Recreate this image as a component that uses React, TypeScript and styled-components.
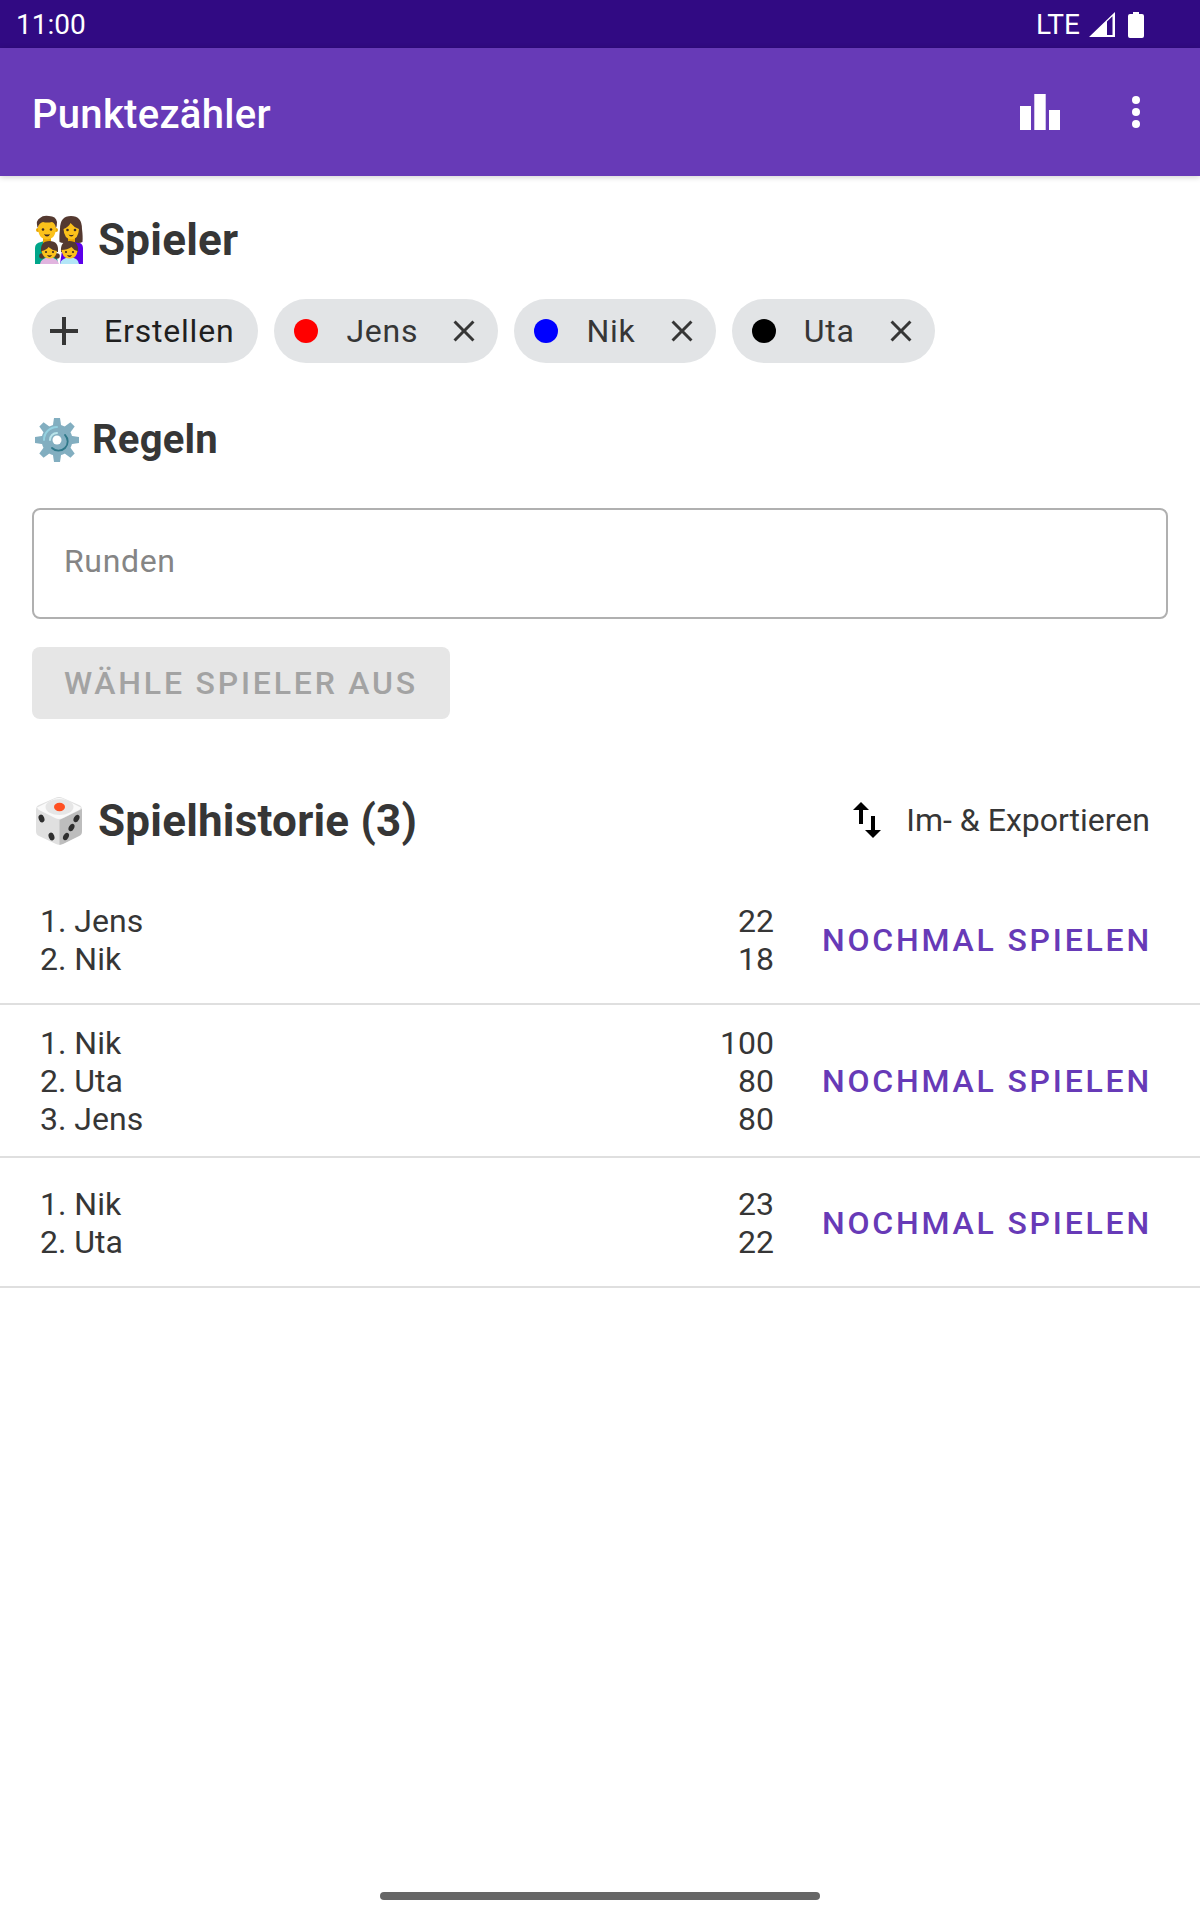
import React from 'react';
import styled, { createGlobalStyle } from 'styled-components';

const Global = createGlobalStyle`
  *, *::before, *::after { box-sizing: border-box; }
  body { margin: 0; background: #fff; color: #363636; font: 32px/38px Roboto, sans-serif; }
  button, input { font: inherit; color: inherit; letter-spacing: inherit; }
  h1, h2, ul, ol { margin: 0; padding: 0; }
  ul, ol { list-style: none; }
  svg { display: block; flex: none; }
`;

const Screen = styled.div`
  min-height: 100vh;
  display: flex;
  flex-direction: column;
`;

const StatusBar = styled.div`
  display: flex;
  justify-content: space-between;
  align-items: center;
  height: 48px;
  padding: 2px 56px 0 16px;
  background: #310a83;
  color: #fff;
  font-size: 28px;
`;

const StatusIcons = styled.div`
  display: flex;
  align-items: center;
  gap: 12px;
`;

const Network = styled.span`
  display: flex;
  align-items: center;
  gap: 8px;
`;

const AppBar = styled.header`
  display: flex;
  align-items: center;
  height: 128px;
  padding: 0 32px;
  background: #673ab7;
  color: #fff;
  box-shadow: 0 1px 6px rgba(0, 0, 0, 0.2);
`;

const AppTitle = styled.h1`
  flex: 1;
  padding-top: 6px;
  font-size: 40px;
  font-weight: 500;
  letter-spacing: 0.0075em;
`;

const Actions = styled.div`
  display: flex;
  gap: 48px;
  padding-right: 8px;
`;

const PlainButton = styled.button`
  display: flex;
  align-items: center;
  padding: 0;
  border: 0;
  background: none;
  cursor: pointer;
`;

const Section = styled.section`
  padding: 0 32px;
`;

const Heading = styled.h2<{ $small?: boolean }>`
  display: flex;
  align-items: center;
  gap: ${(p) => (p.$small ? 12 : 14)}px;
  padding-left: 2px;
  font-size: ${(p) => (p.$small ? 40 : 44)}px;
  line-height: 52px;
  font-weight: 700;
  letter-spacing: 0.005em;
`;

const PlayersSection = styled(Section)`
  padding-top: 38px;
`;

const Chips = styled.div`
  display: flex;
  flex-wrap: wrap;
  gap: 16px;
  margin-top: 33px;
`;

const Chip = styled.div`
  display: flex;
  align-items: center;
  height: 64px;
  padding: 0 16px 0 20px;
  border-radius: 32px;
  background: #e2e4e6;
  letter-spacing: 0.025em;
`;

const CreateChip = styled.button`
  display: flex;
  align-items: center;
  gap: 16px;
  height: 64px;
  padding: 0 24px 0 8px;
  border: 0;
  border-radius: 32px;
  background: #e2e4e6;
  color: #1f1f1f;
  letter-spacing: 0.025em;
  cursor: pointer;
`;

const Dot = styled.span<{ $color: string }>`
  width: 24px;
  height: 24px;
  border-radius: 50%;
  background: ${(p) => p.$color};
`;

const ChipName = styled.span`
  padding: 0 28px;
`;

const RulesSection = styled(Section)`
  padding-top: 51px;
`;

const RoundsField = styled.input`
  display: block;
  width: 100%;
  height: 111px;
  margin-top: 42px;
  padding: 0 30px 6px;
  border: 2px solid #b0b0b0;
  border-radius: 8px;
  background: transparent;
  letter-spacing: 0.02em;
  &::placeholder { color: #858585; opacity: 1; }
`;

const StartButton = styled.button`
  height: 72px;
  margin-top: 28px;
  padding: 0 32px;
  border: 0;
  border-radius: 8px;
  background: #e6e6e6;
  font-weight: 500;
  letter-spacing: 0.0875em;
  &:disabled { color: #a3a3a3; }
`;

const HistoryHeader = styled(Section)`
  display: flex;
  justify-content: space-between;
  align-items: center;
  padding-top: 76px;
`;

const TransferButton = styled(PlainButton)`
  gap: 15px;
  padding: 0 18px 2px 0;
`;

const GameList = styled.ul`
  margin-top: 28px;
`;

const GameRow = styled.li`
  display: flex;
  align-items: center;
  gap: 32px;
  min-height: 130px;
  padding: 19px 32px 18px 40px;
  border-bottom: 2px solid #dfdfdf;
`;

const Ranking = styled.ol`
  flex: 1;
`;

const Rank = styled.li`
  display: flex;
  justify-content: space-between;
`;

const ReplayButton = styled(PlainButton)`
  padding: 0 16px;
  color: #673ab7;
  font-weight: 500;
  letter-spacing: 0.0875em;
`;

const NavBar = styled.footer`
  display: flex;
  justify-content: center;
  margin-top: auto;
  padding: 20px 0;
`;

const NavHandle = styled.span`
  width: 440px;
  height: 8px;
  border-radius: 4px;
  background: #666;
`;

const SignalIcon = () => (
  <svg width="28" height="28" viewBox="0 0 28 28" fill="#fff">
    <path fillRule="evenodd" d="M27 1v25H1zM19 10.5V24h5.500V5.200z" />
  </svg>
);

const BatteryIcon = () => (
  <svg width="16" height="26" viewBox="0 0 16 26" fill="#fff">
    <path d="M5 0h6v2h3a2 2 0 0 1 2 2v20a2 2 0 0 1-2 2H2a2 2 0 0 1-2-2V4a2 2 0 0 1 2-2h3z" />
  </svg>
);

const StatsIcon = () => (
  <svg width="48" height="48" viewBox="0 0 48 48" fill="#fff">
    <path d="M4 18h11v24H4zM18.300 6h11.400v36H18.300zM33 22h11v20H33z" />
  </svg>
);

const MoreIcon = () => (
  <svg width="48" height="48" viewBox="0 0 48 48" fill="#fff">
    <circle cx="24" cy="12" r="4" />
    <circle cx="24" cy="24" r="4" />
    <circle cx="24" cy="36" r="4" />
  </svg>
);

const PlusIcon = () => (
  <svg width="48" height="48" viewBox="0 0 24 24" fill="#363636">
    <path d="M19 13h-6v6h-2v-6H5v-2h6V5h2v6h6z" />
  </svg>
);

const CloseIcon = () => (
  <svg width="36" height="36" viewBox="0 0 24 24" fill="#363636">
    <path d="M19 6.410L17.590 5 12 10.590 6.410 5 5 6.410 10.590 12 5 17.590 6.410 19 12 13.410 17.590 19 19 17.590 13.410 12z" />
  </svg>
);

const TransferIcon = () => (
  <svg width="48" height="48" viewBox="0 0 24 24" fill="#000">
    <path d="M9 3L5 6.990h3V14h2V6.990h3L9 3zm7 14.010V10h-2v7.010h-3L15 21l4-3.990h-3z" />
  </svg>
);

const FamilyIcon = () => (
  <svg width="50" height="50" viewBox="0 0 50 50">
    <path d="M1 49V33q0-5 6-6l6-2 8 4 3 20z" fill="#00a68a" />
    <path d="M49 49V33q0-5-6-6l-6-2-8 4-3 20z" fill="#5b00ea" />
    <path d="M9 21h8v7l-4 3-4-3z" fill="#e8a500" />
    <path d="M37 1q11 0 11 13 1 8 .5 13-4 2-8 0l-3.500-4-3.500 4q-4 2-8 0-.5-5 .5-13Q26 1 37 1z" fill="#543930" />
    <path d="M34 21h7v6l-3.500 3-3.500-3z" fill="#e8a500" />
    <circle cx="4" cy="15" r="2" fill="#e8a500" />
    <circle cx="22" cy="15" r="2" fill="#e8a500" />
    <path d="M4 12q0-9 9-9t9 9q0 12-9 12.500Q4 24 4 12z" fill="#fbc11b" />
    <path d="M3.500 13Q1.500 5 6 3q3-3 9-2 7 0 8 6 0 4-1 6-1-5-4-6-5 1-9 0-4 1-5.500 6z" fill="#543930" />
    <path d="M29.500 14q5-2 7-6 3 4 8.500 6-.5 10-7.500 10.500-7.500-.5-8-10.500z" fill="#fbc11b" />
    <g fill="#3d2b24">
      <circle cx="9" cy="14.500" r="1.300" />
      <circle cx="17" cy="14.500" r="1.300" />
      <circle cx="33.500" cy="15" r="1.300" />
      <circle cx="41" cy="15" r="1.300" />
      <path d="M10 19q3 1 6 0-1 2.500-3 2.500T10 19zM34.500 19.500q3 1 5.500 0-1 2-2.700 2t-2.800-2z" />
    </g>
    <path d="M6 49q1-6 9-6.500t10 6.500z" fill="#e1b4df" />
    <path d="M26 49q1-6 9.500-6.500T45 49z" fill="#b3e6f7" />
    <circle cx="8" cy="41" r="2.800" fill="#543930" />
    <circle cx="23" cy="41" r="2.800" fill="#543930" />
    <path d="M7 37q-1-11 8.500-11T24 37zM27 37q-1-11 8.500-11T44 37z" fill="#543930" />
    <path d="M7.500 36q5-1 7-4 3 3 8.500 4-1 7.500-7.500 7.500T7.500 36z" fill="#fbc11b" />
    <path d="M27.500 35q6 0 10-3 2 3 6 4-1 7.500-8 7.500t-8-8.500z" fill="#fbc11b" />
    <g fill="#3d2b24">
      <circle cx="12" cy="37" r="1.100" />
      <circle cx="19" cy="37" r="1.100" />
      <circle cx="32" cy="37" r="1.100" />
      <circle cx="39" cy="37" r="1.100" />
      <path d="M13 40q2.500.8 5 0-1 2-2.500 2T13 40zM33 40q2.500.8 5 0-1 2-2.500 2T33 40z" />
    </g>
  </svg>
);

const GearIcon = () => (
  <svg width="46" height="46" viewBox="0 0 46 46">
    <g fill="#82aec0">
      {[0, 45, 90, 135, 180, 225, 270, 315].map((a) => (
        <path key={a} d="M20 1h6l1.500 10h-9z" transform={`rotate(${a} 23 23)`} />
      ))}
    </g>
    <circle cx="23" cy="23" r="10" fill="none" stroke="#82aec0" strokeWidth="11" />
    <path d="M10 23A13 13 0 0 1 23 10" fill="none" stroke="#94d1e0" strokeWidth="2" strokeLinecap="round" />
    <circle cx="23" cy="23" r="8" fill="#82aec0" />
    <path d="M16 23A7 7 0 0 1 23 16" fill="none" stroke="#b9e4ea" strokeWidth="2" strokeLinecap="round" />
    <path d="M31 18A9 9 0 0 1 18 31" fill="none" stroke="#2f7889" strokeWidth="1.800" strokeLinecap="round" />
    <circle cx="23" cy="23" r="4.500" fill="#fff" />
  </svg>
);

const DiceIcon = () => (
  <svg width="50" height="50" viewBox="0 0 50 50">
    <path d="M2 14q0-4 3-5L21 2q4-2 8 0l16 7q3 1 3 5v21q0 4-3 5l-17 8q-3 1.500-6 0L5 40q-3-1-3-5z" fill="#e0e0e0" />
    <path d="M25.500 24L48 13v22q0 4-3 5l-16 8-3.500 1z" fill="#bdbdbd" />
    <path d="M3 11.500L20 3q5-2 10 0l17 8.500q-1 2-3 3L29 22q-4 2-8 0L6 14.500q-2-1-3-3z" fill="#fafafa" />
    <ellipse cx="25.500" cy="11" rx="14" ry="8" fill="#e6e6e6" />
    <ellipse cx="25.500" cy="11" rx="5.500" ry="4.200" fill="#ff5022" />
    <g fill="#2f2f2f">
      <ellipse cx="7.500" cy="22.500" rx="2.800" ry="4" transform="rotate(-20 7.500 22.500)" />
      <ellipse cx="17.500" cy="40.500" rx="2.800" ry="4" transform="rotate(-20 17.500 40.500)" />
      <ellipse cx="42.500" cy="22.500" rx="2.600" ry="4" transform="rotate(28 42.500 22.500)" />
      <ellipse cx="37.500" cy="31.500" rx="2.600" ry="4" transform="rotate(28 37.500 31.500)" />
      <ellipse cx="32" cy="40.500" rx="2.600" ry="4" transform="rotate(28 32 40.500)" />
    </g>
  </svg>
);

const players = [
  { name: 'Jens', color: '#ff0000' },
  { name: 'Nik', color: '#0000ff' },
  { name: 'Uta', color: '#000000' },
];

const games: [string, number][][] = [
  [['Jens', 22], ['Nik', 18]],
  [['Nik', 100], ['Uta', 80], ['Jens', 80]],
  [['Nik', 23], ['Uta', 22]],
];

export default function App() {
  return (
    <>
      <Global />
      <Screen>
        <StatusBar>
          <span>11:00</span>
          <StatusIcons>
            <Network>LTE<SignalIcon /></Network>
            <BatteryIcon />
          </StatusIcons>
        </StatusBar>
        <AppBar>
          <AppTitle>Punktezähler</AppTitle>
          <Actions>
            <PlainButton aria-label="Statistik"><StatsIcon /></PlainButton>
            <PlainButton aria-label="Menü"><MoreIcon /></PlainButton>
          </Actions>
        </AppBar>
        <main>
          <PlayersSection>
            <Heading><FamilyIcon />Spieler</Heading>
            <Chips>
              <CreateChip><PlusIcon />Erstellen</CreateChip>
              {players.map((p) => (
                <Chip key={p.name}>
                  <Dot $color={p.color} />
                  <ChipName>{p.name}</ChipName>
                  <PlainButton aria-label={`${p.name} entfernen`}><CloseIcon /></PlainButton>
                </Chip>
              ))}
            </Chips>
          </PlayersSection>
          <RulesSection>
            <Heading $small><GearIcon />Regeln</Heading>
            <RoundsField placeholder="Runden" aria-label="Runden" inputMode="numeric" />
            <StartButton disabled>WÄHLE SPIELER AUS</StartButton>
          </RulesSection>
          <HistoryHeader>
            <Heading><DiceIcon />Spielhistorie ({games.length})</Heading>
            <TransferButton><TransferIcon />Im- &amp; Exportieren</TransferButton>
          </HistoryHeader>
          <GameList>
            {games.map((game, i) => (
              <GameRow key={i}>
                <Ranking>
                  {game.map(([name, score], place) => (
                    <Rank key={name}>
                      <span>{`${place + 1}. ${name}`}</span>
                      <span>{score}</span>
                    </Rank>
                  ))}
                </Ranking>
                <ReplayButton>NOCHMAL SPIELEN</ReplayButton>
              </GameRow>
            ))}
          </GameList>
        </main>
        <NavBar><NavHandle /></NavBar>
      </Screen>
    </>
  );
}
